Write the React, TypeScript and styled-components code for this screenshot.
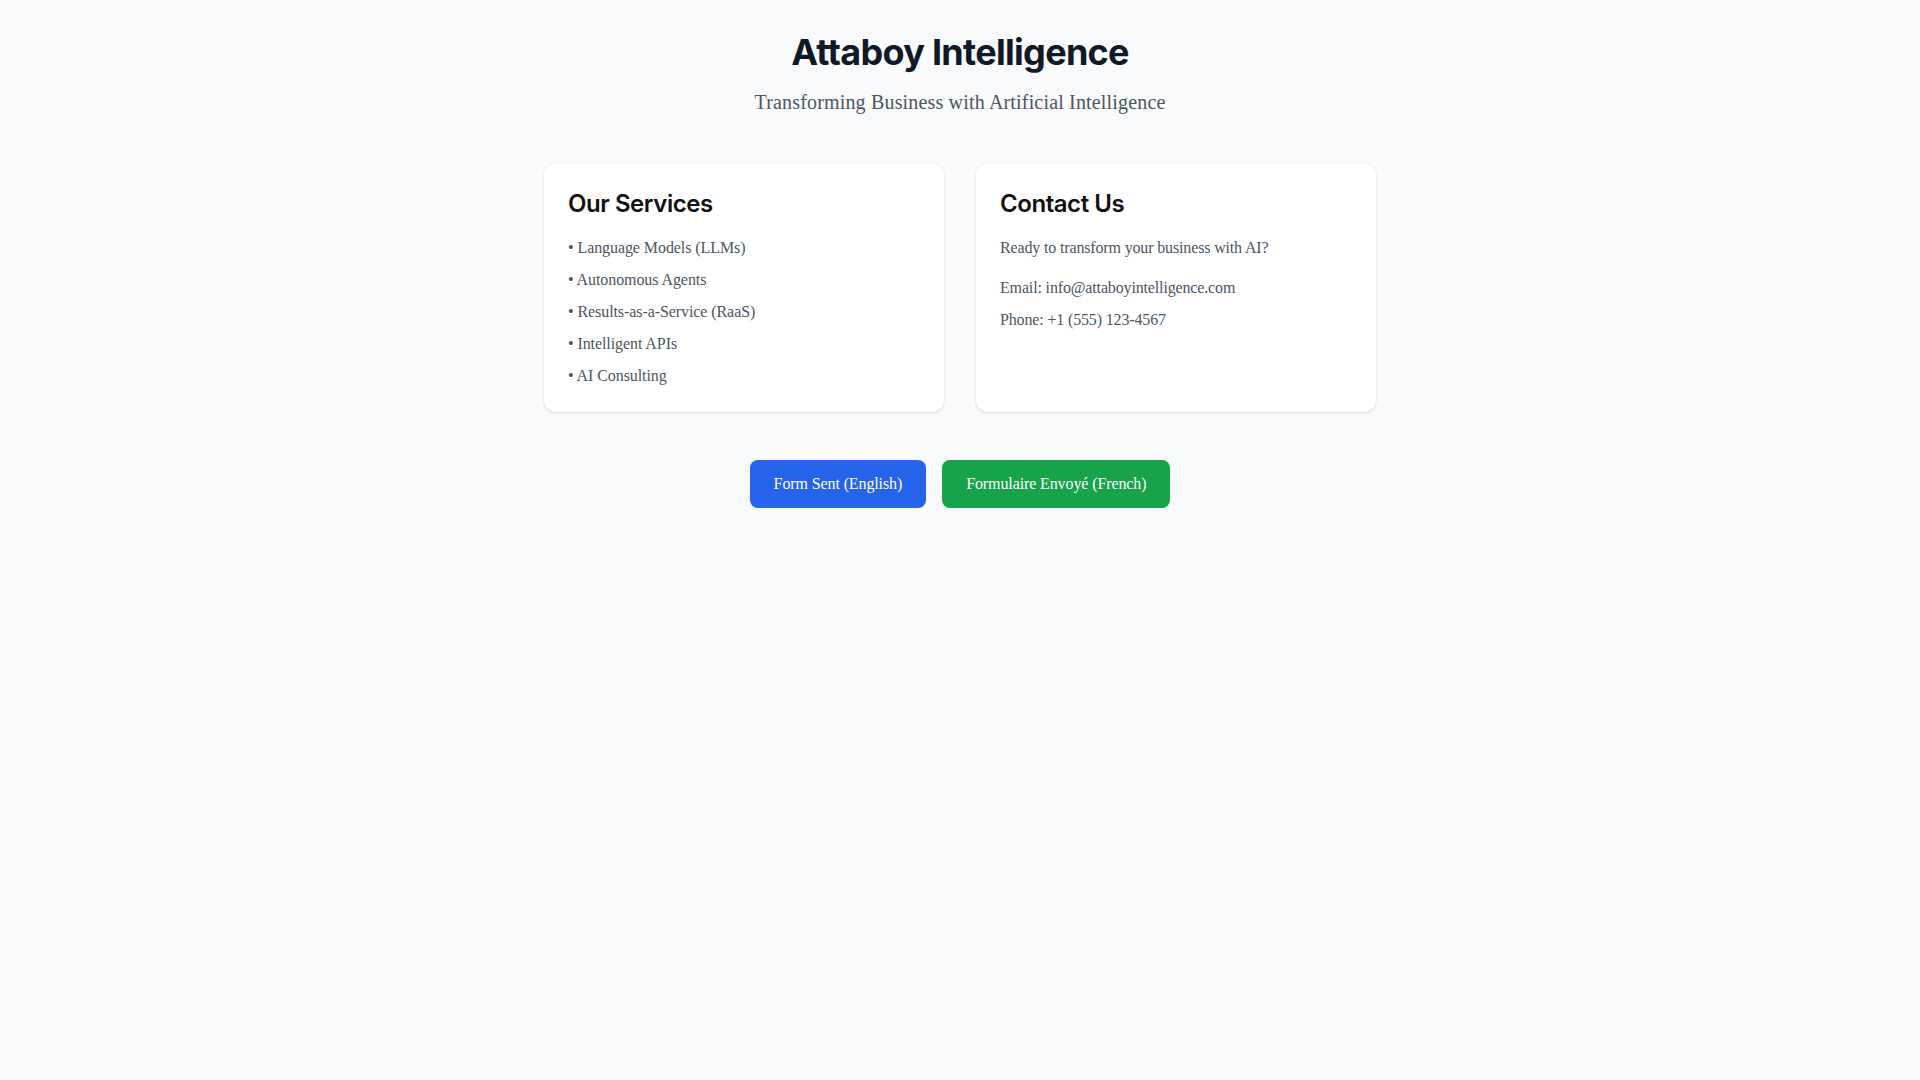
import React from "react";
import styled, { createGlobalStyle } from "styled-components";

const GlobalStyle = createGlobalStyle`
  * {
    box-sizing: border-box;
  }
  html, body {
    margin: 0;
    padding: 0;
    background-color: #f9fafb;
    font-family: "Liberation Serif", "Times New Roman", serif;
  }
`;

const Page = styled.div`
  min-height: 100vh;
  background-color: #f9fafb;
  padding: 32px 16px;
`;

const Container = styled.div`
  max-width: 832px;
  margin: 0 auto;
`;

const Header = styled.header`
  text-align: center;
  margin-bottom: 48px;
`;

const Title = styled.h1`
  margin: 0 0 16px;
  font-family: Inter, "Liberation Sans", sans-serif;
  font-size: 36px;
  line-height: 40px;
  font-weight: 700;
  color: #111827;
  letter-spacing: -0.7px;
`;

const Subtitle = styled.p`
  margin: 0;
  font-size: 20px;
  line-height: 28px;
  color: #4b5563;
  letter-spacing: 0.17px;
`;

const Grid = styled.div`
  display: grid;
  grid-template-columns: 1fr 1fr;
  gap: 32px;
`;

const Card = styled.section`
  background: #ffffff;
  border-radius: 12px;
  padding: 24px;
  box-shadow: 0 1px 3px rgba(0, 0, 0, 0.1), 0 1px 2px rgba(0, 0, 0, 0.06);
`;

const CardTitle = styled.h2`
  margin: 0 0 16px;
  font-family: Inter, "Liberation Sans", sans-serif;
  font-size: 24px;
  line-height: 32px;
  font-weight: 600;
  color: #111111;
  letter-spacing: -0.45px;
`;

const List = styled.ul`
  list-style: none;
  margin: 0;
  padding: 0;
  display: flex;
  flex-direction: column;
  gap: 8px;
`;

const Item = styled.li`
  font-size: 16px;
  line-height: 24px;
  color: #4b5563;
  letter-spacing: -0.08px;
`;

const Text = styled.p<{ $gap?: number }>`
  margin: 0 0 ${(p) => p.$gap ?? 0}px;
  font-size: 16px;
  line-height: 24px;
  color: #4b5563;
  letter-spacing: -0.15px;
`;

const Actions = styled.div`
  display: flex;
  justify-content: center;
  gap: 16px;
  margin-top: 48px;
`;

const Button = styled.button<{ $color: string }>`
  border: none;
  border-radius: 8px;
  padding: 12px 24px;
  font-family: "Liberation Serif", "Times New Roman", serif;
  font-size: 16px;
  line-height: 24px;
  letter-spacing: -0.11px;
  color: #ffffff;
  background-color: ${(p) => p.$color};
  cursor: pointer;
`;

const services = [
  "Language Models (LLMs)",
  "Autonomous Agents",
  "Results-as-a-Service (RaaS)",
  "Intelligent APIs",
  "AI Consulting",
];

const App: React.FC = () => {
  return (
    <>
      <GlobalStyle />
      <Page>
        <Container>
          <Header>
            <Title>Attaboy Intelligence</Title>
            <Subtitle>Transforming Business with Artificial Intelligence</Subtitle>
          </Header>
          <Grid>
            <Card>
              <CardTitle>Our Services</CardTitle>
              <List>
                {services.map((s) => (
                  <Item key={s}>• {s}</Item>
                ))}
              </List>
            </Card>
            <Card>
              <CardTitle>Contact Us</CardTitle>
              <Text $gap={16}>Ready to transform your business with AI?</Text>
              <Text $gap={8}>Email: info@attaboyintelligence.com</Text>
              <Text>Phone: +1 (555) 123-4567</Text>
            </Card>
          </Grid>
          <Actions>
            <Button $color="#2563eb">Form Sent (English)</Button>
            <Button $color="#16a34a">Formulaire Envoyé (French)</Button>
          </Actions>
        </Container>
      </Page>
    </>
  );
};

export default App;
